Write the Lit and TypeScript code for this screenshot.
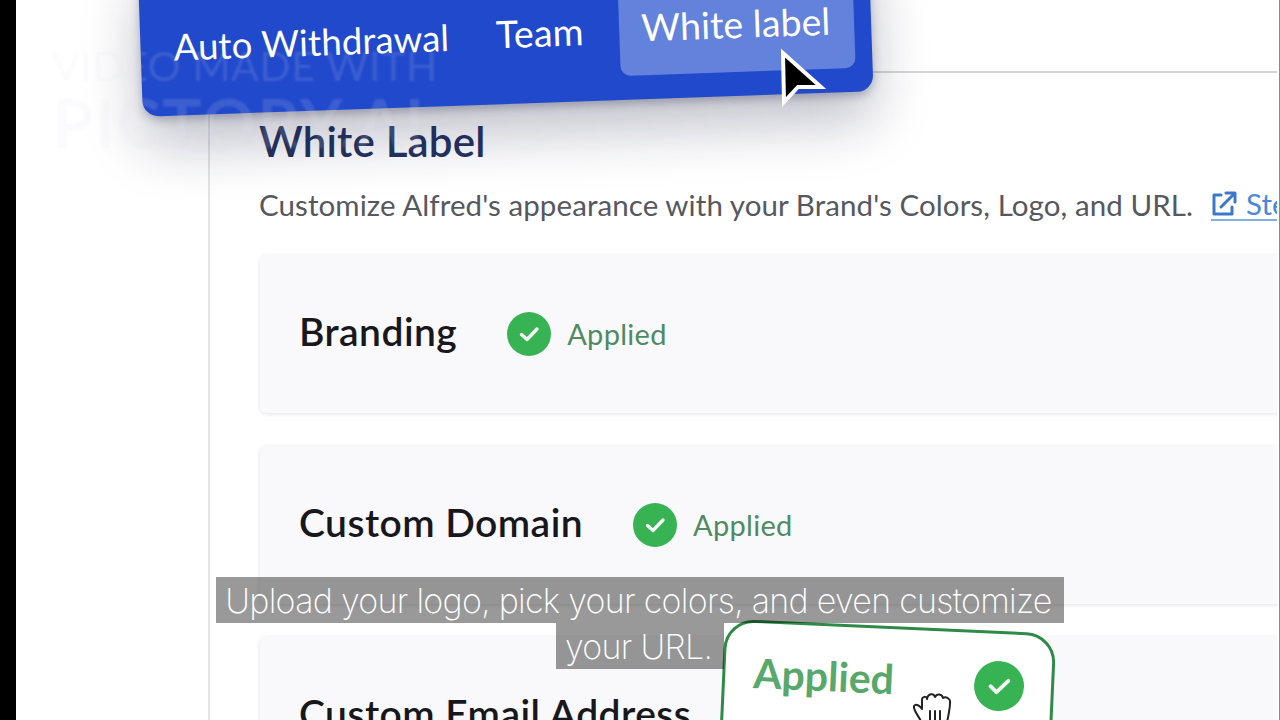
import { LitElement, html, css } from "lit";
import { customElement } from "lit/decorators.js";

const check = (size: number) => html`<svg class="check" width=${size} height=${size} viewBox="0 0 44 44" aria-hidden="true">
  <circle cx="22" cy="22" r="22" fill="#38b354"></circle>
  <path d="M14.5 22.5 L20 27.5 L30 17" fill="none" stroke="#f4fbf5" stroke-width="3.4" stroke-linecap="round" stroke-linejoin="round"></path>
</svg>`;

const rows = [
  { title: "Branding" },
  { title: "Custom Domain" },
  { title: "Custom Email Address" },
];

@customElement("app-root")
export class AppRoot extends LitElement {
  static styles = css`
    :host {
      display: flex;
      position: relative;
      width: 1280px;
      height: 720px;
      overflow: hidden;
      background: #fff;
      font-family: "Lato", "Open Sans", sans-serif;
    }
    .edge { width: 16px; flex: none; background: #000; }
    .edge-r { width: 2px; flex: none; background: #fff; border-right: 1px solid #8a8a8a; }
    .main { flex: 1; min-width: 0; padding: 71px 0 0 192px; }
    .panel {
      height: 100%;
      border-top: 2px solid #d6d6d8;
      border-left: 2px solid #e4e4e6;
      padding: 0 0 0 49px;
      box-sizing: border-box;
      overflow: hidden;
    }
    h1 {
      margin: 45px 0 0;
      font-size: 42px;
      line-height: 46px;
      font-weight: 600;
      letter-spacing: 0.2px;
      color: #25325f;
      white-space: nowrap;
    }
    .desc {
      display: flex;
      align-items: center;
      gap: 18px;
      margin-top: 20px;
      height: 40px;
      white-space: nowrap;
      font-size: 29.5px;
      letter-spacing: 0.08px;
      color: #55585f;
    }
    .link {
      display: flex;
      align-items: center;
      gap: 9px;
      color: #4a88db;
      border-bottom: 2px solid #86aee5;
      height: 31px;
    }
    .cards {
      display: flex;
      flex-direction: column;
      gap: 33px;
      margin: 31px 0 0 1px;
      width: 1100px;
    }
    .card {
      height: 158px;
      flex: none;
      box-sizing: border-box;
      padding: 54px 0 0 39px;
      display: flex;
      align-items: flex-start;
      background: #f9f9fb;
      border-radius: 6px;
      box-shadow: 0 1px 4px rgba(40, 40, 60, 0.14);
    }
    .card h2 {
      margin: 0 50px 0 0;
      font-size: 39px;
      line-height: 44px;
      font-weight: 600;
      letter-spacing: 0.45px;
      color: #18181c;
      white-space: nowrap;
    }
    .status {
      display: flex;
      align-items: center;
      gap: 16px;
      font-size: 29px;
      letter-spacing: 0.3px;
      line-height: 44px;
      color: #4f8a62;
      margin-top: 3px;
    }

    .tabs {
      position: absolute;
      left: 140px;
      top: -51px;
      width: 731px;
      height: 155px;
      box-sizing: border-box;
      padding: 40px 20px 24px 33px;
      display: flex;
      align-items: stretch;
      background: #2149cc;
      border-radius: 16px;
      transform: rotate(-2deg);
      box-shadow: 0 28px 56px rgba(20, 25, 60, 0.28), 0 4px 8px rgba(20, 25, 60, 0.25);
      color: #fff;
      font-size: 36.6px;
      letter-spacing: 0.1px;
    }
    .tab { display: flex; align-items: center; white-space: nowrap; }
    .tab.t2 { margin-left: 47px; padding-bottom: 3px; font-size: 37.6px; }
    .tab.on {
      margin-left: 36px;
      padding: 0 24px 7px 22px;
      background: #6382dc;
      border-radius: 10px;
      font-size: 37.4px;
    }
    .mark {
      position: absolute;
      left: 52px;
      top: 44px;
      color: rgba(225, 228, 240, 0.14);
      pointer-events: none;
      filter: blur(1px);
      white-space: nowrap;
    }
    .mark div:first-child { font-size: 41px; line-height: 44px; font-weight: 400; letter-spacing: 0.6px; }
    .mark div:last-child { font-size: 66px; line-height: 70px; font-weight: 700; letter-spacing: 2px; }

    .pointer { position: absolute; left: 775px; top: 47px; }

    .applied {
      position: absolute;
      left: 721px;
      top: 626px;
      width: 332px;
      height: 160px;
      box-sizing: border-box;
      padding: 26px 27px 0 28px;
      background: #fff;
      border: 3px solid #2f8a48;
      border-radius: 30px;
      transform: rotate(2.6deg);
      display: flex;
      align-items: flex-start;
      justify-content: space-between;
    }
    .applied span {
      font-size: 41px;
      line-height: 48px;
      font-weight: 700;
      color: #58a86c;
    }
    .applied .check { margin-top: 1px; }
    .hand { position: absolute; left: 912px; top: 691px; }

    .caption {
      position: absolute;
      left: 0;
      right: 0;
      top: 577px;
      display: flex;
      flex-direction: column;
      align-items: center;
      color: #fff;
      font-family: "Inter", sans-serif;
      font-weight: 200;
      font-size: 34px;
      line-height: 44px;
      letter-spacing: -0.72px;
    }
    .caption span {
      display: block;
      padding: 2px 12px 0 9px;
      background: rgba(0, 0, 0, 0.4);
      white-space: nowrap;
    }
  `;

  render() {
    return html`
      <div class="edge"></div>
      <div class="main">
        <div class="panel">
          <h1>White Label</h1>
          <div class="desc">
            <span>Customize Alfred's appearance with your Brand's Colors, Logo, and URL.</span>
            <span class="link">
              <svg width="26" height="26" viewBox="0 0 26 26" fill="none" stroke="#3a78cc" stroke-width="3" stroke-linecap="round" stroke-linejoin="round" aria-hidden="true">
                <path d="M10 5 H3 V24 H21 V17"></path>
                <path d="M10 17 L22 5 M15 3 H24 V12"></path>
              </svg>
              Step by Step
            </span>
          </div>
          <div class="cards">
            ${rows.map(
              (r, i) => html`<div class="card">
                <h2>${r.title}</h2>
                ${i < 2 ? html`<div class="status">${check(44)}<span>Applied</span></div>` : ""}
              </div>`
            )}
          </div>
        </div>
      </div>
      <div class="edge-r"></div>

      <nav class="tabs">
        <div class="tab">Auto Withdrawal</div>
        <div class="tab t2">Team</div>
        <div class="tab on">White label</div>
      </nav>

      <div class="mark"><div>VIDEO MADE WITH</div><div>PICTORY.AI</div></div>

      <svg class="pointer" width="56" height="64" viewBox="0 0 56 64" aria-hidden="true">
        <path d="M8 6 L9 55 L23 40 L46 40 Z" fill="#000" stroke="#fff" stroke-width="4" stroke-linejoin="miter"></path>
      </svg>

      <div class="applied">
        <span>Applied</span>
        ${check(50)}
      </div>
      <svg class="hand" width="46" height="32" viewBox="0 0 46 32" fill="#fff" stroke="#222" stroke-width="2" stroke-linecap="round" stroke-linejoin="round" aria-hidden="true">
        <path d="M10 32 C6 24 1 19 2 15 C4 12 8 15 10 18 L10 9 C10 5 15 5 15 8 C16 2 22 2 23 6 C25 2 30 3 31 7 C34 5 39 8 38 12 C38 18 36 26 35 32"></path>
        <path d="M18 20 V32 M23 20 V32 M28 20 V32" fill="none"></path>
      </svg>

      <div class="caption">
        <span>Upload your logo, pick your colors, and even customize</span>
        <span>your URL.</span>
      </div>
    `;
  }
}
